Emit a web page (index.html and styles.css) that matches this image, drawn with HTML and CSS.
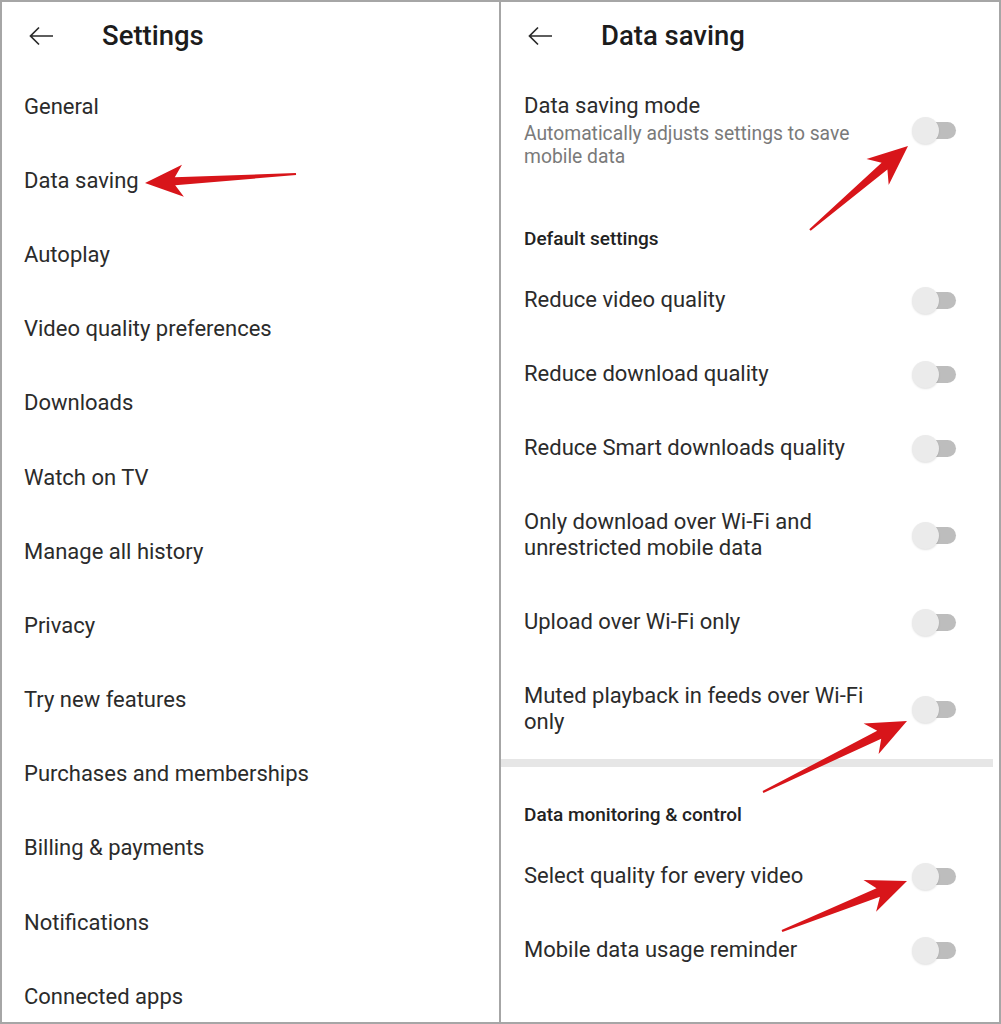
FILE: index.html
```html
<!DOCTYPE html>
<html lang="en">

<head>
  <meta charset="UTF-8">
  <meta name="viewport" content="width=device-width, initial-scale=1.0">
  <title>Settings - Data saving</title>
  <link rel="stylesheet" href="styles.css">
</head>

<body>

  <div class="frame">

    <section class="panel panel-left">
      <header class="topbar">
        <svg class="back" width="26" height="20" viewBox="0 0 26 20">
          <path d="M25 10H2.5M11 1.5L2.5 10L11 18.5" />
        </svg>
        <h1>Settings</h1>
      </header>

      <ul class="menu">
        <li>General</li>
        <li>Data saving</li>
        <li>Autoplay</li>
        <li>Video quality preferences</li>
        <li>Downloads</li>
        <li>Watch on TV</li>
        <li>Manage all history</li>
        <li>Privacy</li>
        <li>Try new features</li>
        <li>Purchases and memberships</li>
        <li>Billing &amp; payments</li>
        <li>Notifications</li>
        <li>Connected apps</li>
      </ul>
    </section>

    <section class="panel panel-right">
      <header class="topbar">
        <svg class="back" width="26" height="20" viewBox="0 0 26 20">
          <path d="M25 10H2.5M11 1.5L2.5 10L11 18.5" />
        </svg>
        <h1>Data saving</h1>
      </header>

      <div class="row row-mode">
        <div class="label">
          <div>Data saving mode</div>
          <div class="sub">Automatically adjusts settings to save<br>mobile data</div>
        </div>
        <span class="toggle"></span>
      </div>

      <h2 class="section">Default settings</h2>

      <div class="row">
        <div class="label">Reduce video quality</div>
        <span class="toggle"></span>
      </div>
      <div class="row">
        <div class="label">Reduce download quality</div>
        <span class="toggle"></span>
      </div>
      <div class="row">
        <div class="label">Reduce Smart downloads quality</div>
        <span class="toggle"></span>
      </div>
      <div class="row row-tall">
        <div class="label">Only download over Wi-Fi and<br>unrestricted mobile data</div>
        <span class="toggle"></span>
      </div>
      <div class="row">
        <div class="label">Upload over Wi-Fi only</div>
        <span class="toggle"></span>
      </div>
      <div class="row row-tall">
        <div class="label">Muted playback in feeds over Wi-Fi<br>only</div>
        <span class="toggle"></span>
      </div>

      <div class="divider"></div>

      <h2 class="section">Data monitoring &amp; control</h2>

      <div class="row">
        <div class="label">Select quality for every video</div>
        <span class="toggle"></span>
      </div>
      <div class="row">
        <div class="label">Mobile data usage reminder</div>
        <span class="toggle"></span>
      </div>
    </section>

    <!-- red annotation arrows -->
    <svg class="marks" width="1001" height="1024" viewBox="0 0 1001 1024">
      <polygon points="145,183 182,164.7 174.8,177.2 295.9,173 296.1,175 175.2,185.2 183.9,196.7" />
      <polygon points="908,146 866.5,159.1 881.6,162.8 809.3,229.2 810.7,230.8 887.4,169.6 888.7,184.9" />
      <polygon points="907,721 863.6,723.5 877.2,730.7 762.6,791.1 763.4,792.9 881.2,738.7 878.6,753.9" />
      <polygon points="907,881 863.5,880.1 876.5,888.3 781.6,930.1 782.4,931.9 879.9,896.7 876.1,911.7" />
    </svg>

  </div>

</body>

</html>
```

FILE: styles.css
```css
* {
  box-sizing: border-box;
  margin: 0;
  padding: 0;
}

body {
  background: white;
  color: #2b2b2b;
  font-family: Roboto, "Liberation Sans", sans-serif;
}

.frame {
  position: relative;
  display: flex;
  width: 1001px;
  height: 1024px;
  border: 2px solid #a6a6a6;
  background: white;
}

.panel-left {
  width: 499px;
  border-right: 2px solid #a6a6a6;
}

.panel-right {
  flex: 1;
}

.topbar {
  display: flex;
  align-items: center;
  height: 67px;
}

.back {
  fill: none;
  stroke: #2a2a2a;
  stroke-width: 1.7;
}

.panel-left .back {
  margin-left: 26px;
  margin-right: 48px;
}

.panel-right .back {
  margin-left: 26px;
  margin-right: 48px;
}

h1 {
  font-size: 27.5px;
  font-weight: 500;
  color: #1c1c1c;
}

.menu {
  list-style: none;
}

.menu li {
  display: flex;
  align-items: center;
  height: 74.2px;
  padding-left: 22px;
  font-size: 22px;
}

.row {
  display: flex;
  align-items: center;
  justify-content: space-between;
  height: 74px;
  padding: 0 43px 0 23px;
  font-size: 22px;
  line-height: 26px;
}

.row-mode {
  height: 122px;
}

.row-tall {
  height: 100px;
}

.sub {
  margin-top: 3px;
  font-size: 19.3px;
  line-height: 23px;
  color: #7a7a7a;
}

.section {
  height: 72px;
  padding: 36px 0 0 23px;
  font-size: 19px;
  font-weight: 500;
  line-height: 24px;
  color: #222;
}

.divider {
  height: 8px;
  margin-right: 6px;
  background: #e6e6e6;
}

.toggle {
  position: relative;
  flex: none;
  width: 44px;
  height: 27px;
}

.toggle::before {
  content: "";
  position: absolute;
  right: 0;
  top: 5px;
  width: 36px;
  height: 17px;
  border-radius: 9px;
  background: #bdbdbd;
}

.toggle::after {
  content: "";
  position: absolute;
  left: 0;
  top: 0;
  width: 27px;
  height: 27px;
  border-radius: 50%;
  background: #ebebeb;
  box-shadow: 0 1px 2px rgba(0, 0, 0, 0.12);
}

.marks {
  position: absolute;
  left: -2px;
  top: -2px;
  pointer-events: none;
  fill: #d8151a;
}
```
